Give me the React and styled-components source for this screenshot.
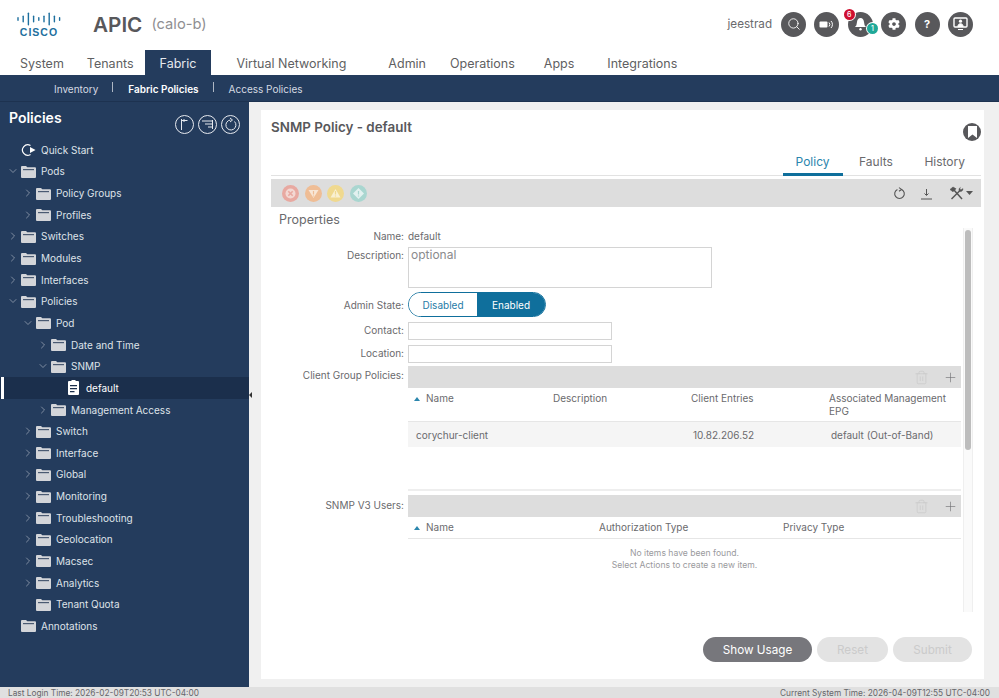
import React from 'react';
import styled, { createGlobalStyle } from 'styled-components';
import { Search, ChevronRight, ChevronDown, Plus, Trash2 } from 'lucide-react';
import { FaCog } from 'react-icons/fa';

const GlobalStyle = createGlobalStyle`
  html, body { margin: 0; padding: 0; background: #fff; }
  * { box-sizing: border-box; }
  body { font-family: Inter, "Noto Sans", sans-serif; color: #58585b; }
`;

const NAVY = '#243c5d';

const Page = styled.div`
  width: 999px;
  height: 698px;
  display: flex;
  flex-direction: column;
  overflow: hidden;
`;

/* ---------- top header ---------- */
const Header = styled.header`
  height: 50px;
  display: flex;
  align-items: center;
  padding: 0 26px 2px 17px;
`;
const Logo = styled.div`
  width: 44px;
  display: flex;
  flex-direction: column;
  align-items: center;
  margin-right: 32px;
`;
const LogoWord = styled.span`
  font-family: "Liberation Sans", sans-serif;
  font-weight: 700;
  font-size: 10.5px;
  line-height: 10px;
  letter-spacing: 1px;
  color: #1d6f9e;
`;
const AppName = styled.span`
  font-size: 20.7px;
  font-weight: 600;
  color: #58585b;
  margin-right: 9px;
`;
const Instance = styled.span`
  font-size: 14.7px;
  color: #8f8f92;
`;
const UserArea = styled.div`
  margin-left: auto;
  display: flex;
  align-items: center;
  gap: 8.4px;
`;
const UserName = styled.span`
  font-size: 11.7px;
  color: #6a6a6d;
  margin-right: 0.6px;
`;
const RoundButton = styled.div`
  position: relative;
  width: 25px;
  height: 25px;
  border-radius: 50%;
  background: #58585b;
  color: #fff;
  display: flex;
  align-items: center;
  justify-content: center;
  font-size: 11px;
  font-weight: 700;
`;
const Badge = styled.span`
  position: absolute;
  width: 11px;
  height: 11px;
  border-radius: 50%;
  background: ${(p) => p.$color};
  color: #fff;
  font-size: 7px;
  font-weight: 500;
  line-height: 11px;
  text-align: center;
  left: ${(p) => p.$left}px;
  top: ${(p) => p.$top}px;
  box-shadow: 0 0 0 1px #fff;
`;

/* ---------- main tabs ---------- */
const TabBar = styled.nav`
  height: 25px;
  display: flex;
  padding-left: 5px;
`;
const TopTab = styled.div`
  padding: 1px 15px 0;
  margin-left: ${(p) => p.$gap || 0}px;
  display: flex;
  align-items: center;
  font-size: 12.5px;
  color: ${(p) => (p.$active ? '#e6e9ee' : '#5f5f62')};
  background: ${(p) => (p.$active ? NAVY : 'transparent')};
`;
const SubBar = styled.nav`
  height: 27px;
  background: ${NAVY};
  display: flex;
  align-items: center;
  padding: 1px 0 0 54px;
  border-bottom: 1px solid #1d3250;
`;
const SubItem = styled.span`
  font-size: 10px;
  color: ${(p) => (p.$active ? '#fff' : '#d5dae2')};
  font-weight: ${(p) => (p.$active ? 600 : 400)};
`;
const SubDivider = styled.span`
  width: 1px;
  height: 10px;
  margin: 0 15px 0 14px;
  background: #aeb7c4;
  transform: translateY(-2px);
`;

/* ---------- body ---------- */
const Body = styled.div`
  flex: 1;
  display: flex;
  min-height: 0;
  background: #f0f0f0;
  position: relative;
`;
const Sidebar = styled.aside`
  width: 249px;
  background: ${NAVY};
  flex-shrink: 0;
  color: #dfe3e9;
`;
const SideHead = styled.div`
  height: 37px;
  display: flex;
  align-items: flex-start;
  padding: 7px 9px 0 9px;
`;
const SideTitle = styled.h2`
  margin: 0;
  font-size: 14px;
  line-height: 18px;
  font-weight: 600;
  color: #fff;
`;
const SideTools = styled.div`
  margin-left: auto;
  margin-top: 6px;
  display: flex;
  gap: 4px;
`;
const TreeRow = styled.div`
  position: relative;
  height: 21.65px;
  display: flex;
  align-items: center;
  padding-left: ${(p) => 7 + p.$level * 15}px;
  font-size: 10px;
  background: ${(p) => (p.$selected ? '#1b2f4c' : 'transparent')};
  color: ${(p) => (p.$selected ? '#fff' : '#dfe3e9')};

  &::before {
    content: ${(p) => (p.$selected ? "''" : 'none')};
    position: absolute;
    left: 1px;
    top: 0;
    bottom: 0;
    width: 3px;
    background: #fff;
  }
`;
const Chevron = styled.span`
  width: 12px;
  margin-right: 2px;
  display: flex;
  justify-content: center;
  color: #aeb7c4;
`;
const TreeIcon = styled.span`
  width: 15px;
  margin-right: 5px;
  display: flex;
  justify-content: center;
`;
const SplitHandle = styled.span`
  position: absolute;
  left: 249px;
  top: 290px;
  width: 0;
  height: 0;
  border-top: 3px solid transparent;
  border-bottom: 3px solid transparent;
  border-right: 3px solid #333;
`;

const Card = styled.main`
  width: 723px;
  margin: 8px 0 8px 12px;
  background: #fff;
  padding: 0 3px 0 10px;
  display: flex;
  flex-direction: column;
`;
const CardHead = styled.div`
  height: 40px;
  display: flex;
  justify-content: space-between;
  padding-top: 9px;
`;
const CardTitle = styled.h1`
  margin: 0;
  font-size: 13.4px;
  line-height: 17px;
  font-weight: 600;
  color: #58585b;
`;
const Bookmark = styled.div`
  width: 18px;
  height: 18px;
  margin-top: 4px;
  border-radius: 50%;
  background: #58585b;
  display: flex;
  justify-content: center;
`;
const DetailTabs = styled.div`
  height: 26px;
  display: flex;
  justify-content: flex-end;
  gap: 1.5px;
  padding-right: 1px;
  border-bottom: 1px solid #e2e2e2;
`;
const DetailTab = styled.div`
  padding: 4px ${(p) => (p.$active ? 13 : 15)}px 0;
  font-size: 12px;
  line-height: 16px;
  color: ${(p) => (p.$active ? '#2b86ad' : '#6a6a6d')};
  border-bottom: 3px solid ${(p) => (p.$active ? '#0f6f9c' : 'transparent')};
  margin-bottom: -1px;
`;
const ToolBar = styled.div`
  height: 28px;
  margin-top: 3px;
  background: #dddddd;
  display: flex;
  align-items: center;
  padding: 0 0 0 11px;
`;
const FaultDots = styled.div`
  display: flex;
  gap: 5.5px;
`;
const ToolRight = styled.div`
  margin-left: auto;
  display: flex;
  align-items: center;
  color: #555;
`;
const ToolSlot = styled.span`
  display: flex;
  align-items: center;
  justify-content: center;
  width: ${(p) => p.$w}px;
`;
const SectionTitle = styled.h3`
  margin: 0 0 0 8px;
  height: 21px;
  font-size: 12.5px;
  line-height: 26px;
  font-weight: 400;
  color: #6a6a6d;
`;
const Scroller = styled.div`
  height: 384px;
  display: flex;
`;
const FormBody = styled.div`
  width: 692px;
  flex-shrink: 0;
`;
const ScrollTrack = styled.div`
  width: 10px;
  background: #fafafa;
  border-left: 1px solid #efefef;
  border-right: 1px solid #efefef;
  padding: 2px 1px 0;
`;
const ScrollThumb = styled.div`
  height: 220px;
  background: #bdbdbd;
  border-radius: 3px;
`;
const Row = styled.div`
  display: flex;
  align-items: ${(p) => p.$align || 'center'};
  margin-bottom: ${(p) => p.$mb || 0}px;
  min-height: ${(p) => p.$h || 0}px;
`;
const Label = styled.label`
  width: 133px;
  flex-shrink: 0;
  margin: ${(p) => p.$top || 0}px 4px 0 0;
  text-align: right;
  font-size: 10px;
  line-height: 16px;
  color: #6a6a6d;
`;
const Value = styled.span`
  font-size: 10px;
  color: #6a6a6d;
`;
const TextArea = styled.div`
  width: 304px;
  height: 41px;
  border: 1px solid #d4d4d4;
  padding: 0 2px;
  font-size: 12px;
  line-height: 14px;
  color: #8a8a8d;
`;
const Toggle = styled.div`
  display: flex;
  width: 138px;
  height: 25px;
  border: 1px solid #0f6f9c;
  border-radius: 13px;
  overflow: hidden;
  font-size: 10px;
`;
const ToggleSide = styled.span`
  flex: 1;
  display: flex;
  align-items: center;
  justify-content: center;
  padding-top: 1px;
  background: ${(p) => (p.$on ? '#0f6f9c' : '#fff')};
  color: ${(p) => (p.$on ? '#fff' : '#1f7ba6')};
`;
const Input = styled.div`
  width: 204px;
  height: 18px;
  border: 1px solid #d4d4d4;
`;
const TableBlock = styled.div`
  width: 553px;
`;
const TableBar = styled.div`
  height: 22px;
  background: #dddddd;
  display: flex;
  align-items: center;
  justify-content: flex-end;
  gap: 14px;
  padding-right: 3px;
  color: #6f6f72;
`;
const TableGrid = styled.div`
  display: grid;
  grid-template-columns: ${(p) => p.$cols};
  height: ${(p) => p.$h}px;
  align-items: ${(p) => p.$align || 'center'};
  padding-top: ${(p) => p.$top || 0}px;
  font-size: 10px;
  color: #6a6a6d;
  background: ${(p) => p.$bg || 'transparent'};
  border-bottom: ${(p) => (p.$line ? '1px solid #e6e6e6' : 'none')};
`;
const Cell = styled.div`
  padding-left: ${(p) => p.$pad ?? 8}px;
  line-height: 13px;
  display: flex;
  align-items: center;
`;
const SortCaret = styled.span`
  width: 0;
  height: 0;
  margin-right: 6px;
  border-left: 3px solid transparent;
  border-right: 3px solid transparent;
  border-bottom: 4px solid #2b86ad;
`;
const Spacer = styled.div`
  height: 44px;
  border-bottom: 2px solid #eeeeee;
  margin-bottom: 4px;
`;
const EmptyNote = styled.div`
  padding-top: 8px;
  text-align: center;
  font-size: 8.6px;
  line-height: 12px;
  color: #9a9a9d;
`;
const Actions = styled.div`
  flex: 1;
  display: flex;
  justify-content: flex-end;
  align-items: flex-start;
  gap: 5px;
  padding: 25px 9px 0 0;
`;
const Pill = styled.button`
  height: 25px;
  width: ${(p) => p.$w}px;
  border: 0;
  border-radius: 13px;
  font-family: inherit;
  font-size: 11.7px;
  background: ${(p) => (p.$primary ? '#77777c' : '#e3e3e3')};
  color: ${(p) => (p.$primary ? '#fff' : '#cbcbcb')};
`;
const Footer = styled.footer`
  height: 11px;
  background: #e0e0e0;
  display: flex;
  justify-content: space-between;
  align-items: center;
  padding: 0 9px 0 8px;
  font-size: 8.3px;
  color: #66666a;
`;

/* ---------- drawings ---------- */
const CiscoBars = () => (
  <svg width="44" height="15" viewBox="0 0 44 15" fill="#1d6f9e">
    {[[1, 4], [6.2, 7], [11.4, 13], [16.6, 7], [21.8, 4], [27, 7], [32.2, 13], [37.4, 7], [42.6, 4]].map(([x, h]) => (
      <rect key={x} x={x - 0.7} y={(14 - h) / 2} width="1.4" height={h} rx="0.7" />
    ))}
  </svg>
);

const Folder = () => (
  <svg width="15" height="13" viewBox="0 0 15 13">
    <path d="M0 2a1 1 0 0 1 1-1h4l1.3 1.2H14a1 1 0 0 1 1 1V12a1 1 0 0 1-1 1H1a1 1 0 0 1-1-1z" fill="#d3d5d9" />
    <rect x="2" y="4" width="11" height="1.2" fill="#4a5a72" />
  </svg>
);

const QuickStartIcon = () => (
  <svg width="15" height="14" viewBox="0 0 15 14" fill="none">
    <path d="M9.5 2.6a5.2 5.2 0 1 0 0 8.8" stroke="#fff" strokeWidth="1.2" />
    <path d="M9 4 14.5 7 9 10z" fill="#fff" />
  </svg>
);

const PolicyDocIcon = () => (
  <svg width="11" height="15" viewBox="0 0 11 15">
    <path d="M1 1h2.5V0h4v1H10a1 1 0 0 1 1 1v12a1 1 0 0 1-1 1H1a1 1 0 0 1-1-1V2a1 1 0 0 1 1-1z" fill="#fff" />
    <path d="M2 5h7v1.2H2zM2 8h7v1.2H2zM2 11h4.5v1.2H2z" fill="#1b2f4c" />
  </svg>
);

const SideRound = ({ children }) => (
  <svg width="19" height="19" viewBox="0 0 19 19" fill="none" stroke="#e6e9ee" strokeWidth="1">
    <circle cx="9.5" cy="9.5" r="9" />
    {children}
  </svg>
);

const Megaphone = () => (
  <svg width="15" height="11" viewBox="0 0 15 11" fill="none">
    <rect x="0.5" y="2.5" width="8" height="6" rx="1" fill="#fff" />
    <path d="M10 3.5a3 3 0 0 1 0 4M12 2a5 5 0 0 1 0 7" stroke="#fff" strokeWidth="1" />
  </svg>
);

const BellIcon = () => (
  <svg width="13" height="14" viewBox="0 0 13 14" fill="#fff">
    <path d="M6.5 1C4.3 1 3.2 2.8 3 5L2.4 8.2 1 10h11l-1.4-1.8L10 5C9.8 2.8 8.7 1 6.5 1z" />
    <circle cx="6.5" cy="12.2" r="1.2" />
  </svg>
);

const ScreenIcon = () => (
  <svg width="15" height="14" viewBox="0 0 15 14" fill="none">
    <rect x="1" y="1" width="13" height="9" rx="1" stroke="#fff" strokeWidth="1.4" />
    <circle cx="7.5" cy="4.2" r="1.6" fill="#fff" />
    <path d="M4.8 9.5c.3-2 1.3-2.8 2.7-2.8s2.4.8 2.7 2.8zM5 12.5h5" fill="#fff" stroke="#fff" />
  </svg>
);

const BookmarkGlyph = () => (
  <svg width="9" height="12" viewBox="0 0 9 12" style={{ marginTop: 3 }}>
    <path d="M0 0h9v12L4.5 8.5 0 12z" fill="#fff" />
  </svg>
);

const FaultDot = ({ color, kind }) => (
  <svg width="17" height="17" viewBox="0 0 17 17">
    <circle cx="8.5" cy="8.5" r="8.5" fill={color} />
    {kind === 'x' && (
      <>
        <circle cx="8.5" cy="8.5" r="5" fill="#f3d8d3" />
        <path d="M6.3 6.3l4.4 4.4M10.7 6.3l-4.4 4.4" stroke={color} strokeWidth="1.6" fill="none" />
      </>
    )}
    {kind === 'down' && <path d="M3.5 5h10l-5 8z" fill="#f8e6d6" />}
    {kind === 'up' && <path d="M8.5 4l5 8.5h-10z" fill="#f9f0d2" />}
    {kind === 'diamond' && <path d="M8.5 3l5.5 5.5-5.5 5.5L3 8.5z" fill="#e2f1ef" />}
    {kind !== 'x' && <path d="M8.5 6v3.6M8.5 10.4v1" stroke={color} strokeWidth="1.2" fill="none" />}
  </svg>
);

const RefreshIcon = () => (
  <svg width="13" height="13" viewBox="0 0 13 13" fill="none" stroke="#555" strokeWidth="1.1">
    <path d="M8.6 2.4a4.8 4.8 0 1 1-4.2 0" />
    <path d="M6 0.6 8.6 2.4 6 4.2" />
  </svg>
);

const DownloadIcon = () => (
  <svg width="13" height="13" viewBox="0 0 13 13" fill="none" stroke="#555" strokeWidth="1">
    <path d="M6.5 2v6M4.5 6.5l2 2 2-2M1 12h11" />
  </svg>
);

const ToolsIcon = () => (
  <svg width="15" height="14" viewBox="0 0 15 14" fill="none" stroke="#555">
    <path d="M4.5 3.5 13 13" strokeWidth="1.5" />
    <path d="M1 3.5 4 1l3 1.8-3 3z" fill="#555" strokeWidth="0.6" />
    <path d="M11 4.5 2.5 13" strokeWidth="1.5" />
    <path d="M14 2.5a2.6 2.6 0 0 1-3.6 2.8 2.6 2.6 0 0 1 1-3.9L10.8 3l1.2.8z" fill="#555" strokeWidth="0.4" />
  </svg>
);

const tree = [
  { level: 0, label: 'Quick Start', icon: 'start' },
  { level: 0, label: 'Pods', open: true, arrow: true },
  { level: 1, label: 'Policy Groups', arrow: true },
  { level: 1, label: 'Profiles', arrow: true },
  { level: 0, label: 'Switches', arrow: true },
  { level: 0, label: 'Modules', arrow: true },
  { level: 0, label: 'Interfaces', arrow: true },
  { level: 0, label: 'Policies', open: true, arrow: true },
  { level: 1, label: 'Pod', open: true, arrow: true },
  { level: 2, label: 'Date and Time', arrow: true },
  { level: 2, label: 'SNMP', open: true, arrow: true },
  { level: 3, label: 'default', icon: 'doc', selected: true },
  { level: 2, label: 'Management Access', arrow: true },
  { level: 1, label: 'Switch', arrow: true },
  { level: 1, label: 'Interface', arrow: true },
  { level: 1, label: 'Global', arrow: true },
  { level: 1, label: 'Monitoring', arrow: true },
  { level: 1, label: 'Troubleshooting', arrow: true },
  { level: 1, label: 'Geolocation', arrow: true },
  { level: 1, label: 'Macsec', arrow: true },
  { level: 1, label: 'Analytics', arrow: true },
  { level: 1, label: 'Tenant Quota' },
  { level: 0, label: 'Annotations' },
];

const topTabs = [
  { label: 'System' },
  { label: 'Tenants', gap: -7 },
  { label: 'Fabric', active: true, gap: -4 },
  { label: 'Virtual Networking', gap: 10 },
  { label: 'Admin', gap: 12 },
  { label: 'Operations', gap: -6 },
  { label: 'Apps', gap: -1 },
  { label: 'Integrations', gap: 3 },
];

const TreeItem = ({ item }) => (
  <TreeRow $level={item.level} $selected={item.selected}>
    <Chevron>
      {item.arrow && (item.open ? <ChevronDown size={12} strokeWidth={1.3} /> : <ChevronRight size={12} strokeWidth={1.3} />)}
    </Chevron>
    <TreeIcon>
      {item.icon === 'start' ? <QuickStartIcon /> : item.icon === 'doc' ? <PolicyDocIcon /> : <Folder />}
    </TreeIcon>
    {item.label}
  </TreeRow>
);

const TableTools = () => (
  <TableBar>
    <Trash2 size={15} strokeWidth={1} color="#c6c6c6" />
    <Plus size={15} strokeWidth={1} />
  </TableBar>
);

export default function App() {
  return (
    <Page>
      <GlobalStyle />
      <Header>
        <Logo>
          <CiscoBars />
          <LogoWord>CISCO</LogoWord>
        </Logo>
        <AppName>APIC</AppName>
        <Instance>(calo-b)</Instance>
        <UserArea>
          <UserName>jeestrad</UserName>
          <RoundButton><Search size={14} strokeWidth={1.5} /></RoundButton>
          <RoundButton><Megaphone /></RoundButton>
          <RoundButton>
            <BellIcon />
            <Badge $color="#cf0f30" $left={-4} $top={-3}>6</Badge>
            <Badge $color="#1fa898" $left={19} $top={11}>1</Badge>
          </RoundButton>
          <RoundButton><FaCog size={12} /></RoundButton>
          <RoundButton>?</RoundButton>
          <RoundButton><ScreenIcon /></RoundButton>
        </UserArea>
      </Header>

      <TabBar>
        {topTabs.map((t) => (
          <TopTab key={t.label} $active={t.active} $gap={t.gap}>{t.label}</TopTab>
        ))}
      </TabBar>
      <SubBar>
        <SubItem>Inventory</SubItem>
        <SubDivider />
        <SubItem $active>Fabric Policies</SubItem>
        <SubDivider />
        <SubItem>Access Policies</SubItem>
      </SubBar>

      <Body>
        <Sidebar>
          <SideHead>
            <SideTitle>Policies</SideTitle>
            <SideTools>
              <SideRound><path d="M6.5 4v11M6.5 5.5h6M9 4v3" /></SideRound>
              <SideRound><path d="M4 6h11M7 9h8M10 12h5M14.5 5v9" /></SideRound>
              <SideRound><path d="M13.5 6.5a5 5 0 1 1-4-1.5M9 3l2.5 2L9 7" /></SideRound>
            </SideTools>
          </SideHead>
          {tree.map((item) => <TreeItem key={item.label + item.level} item={item} />)}
        </Sidebar>
        <SplitHandle />

        <Card>
          <CardHead>
            <CardTitle>SNMP Policy - default</CardTitle>
            <Bookmark><BookmarkGlyph /></Bookmark>
          </CardHead>
          <DetailTabs>
            <DetailTab $active>Policy</DetailTab>
            <DetailTab>Faults</DetailTab>
            <DetailTab>History</DetailTab>
          </DetailTabs>
          <ToolBar>
            <FaultDots>
              <FaultDot color="#e8a9a1" kind="x" />
              <FaultDot color="#efbd95" kind="down" />
              <FaultDot color="#f0d98f" kind="up" />
              <FaultDot color="#a9d6d0" kind="diamond" />
            </FaultDots>
            <ToolRight>
              <ToolSlot $w={27}><RefreshIcon /></ToolSlot>
              <ToolSlot $w={27}><DownloadIcon /></ToolSlot>
              <ToolSlot $w={41}>
                <ToolsIcon />
                <svg width="7" height="4" viewBox="0 0 7 4" style={{ marginLeft: 2 }}><path d="M0 0h7L3.5 4z" fill="#555" /></svg>
              </ToolSlot>
            </ToolRight>
          </ToolBar>
          <SectionTitle>Properties</SectionTitle>
          <Scroller>
            <FormBody>
              <Row $h={16} $mb={3}>
                <Label>Name:</Label>
                <Value>default</Value>
              </Row>
              <Row $align="flex-start" $mb={4}>
                <Label>Description:</Label>
                <TextArea>optional</TextArea>
              </Row>
              <Row $mb={5}>
                <Label $top={1}>Admin State:</Label>
                <Toggle>
                  <ToggleSide>Disabled</ToggleSide>
                  <ToggleSide $on>Enabled</ToggleSide>
                </Toggle>
              </Row>
              <Row $mb={5}>
                <Label $top={-2}>Contact:</Label>
                <Input />
              </Row>
              <Row $mb={3}>
                <Label $top={-2}>Location:</Label>
                <Input />
              </Row>
              <Row $align="flex-start">
                <Label $top={1}>Client Group Policies:</Label>
                <TableBlock>
                  <TableTools />
                  <TableGrid $cols="137px 138px 138px 140px" $h={34} $top={4} $align="start" $line>
                    <Cell $pad={6}><SortCaret />Name</Cell>
                    <Cell>Description</Cell>
                    <Cell>Client Entries</Cell>
                    <Cell>Associated Management EPG</Cell>
                  </TableGrid>
                  <TableGrid $cols="137px 138px 138px 140px" $h={25} $top={1} $bg="#f5f5f5">
                    <Cell>corychur-client</Cell>
                    <Cell />
                    <Cell $pad={10}>10.82.206.52</Cell>
                    <Cell $pad={10}>default (Out-of-Band)</Cell>
                  </TableGrid>
                  <Spacer />
                </TableBlock>
              </Row>
              <Row $align="flex-start">
                <Label $top={2}>SNMP V3 Users:</Label>
                <TableBlock>
                  <TableTools />
                  <TableGrid $cols="183px 184px 186px" $h={22} $line>
                    <Cell $pad={6}><SortCaret />Name</Cell>
                    <Cell>Authorization Type</Cell>
                    <Cell>Privacy Type</Cell>
                  </TableGrid>
                  <EmptyNote>
                    No items have been found.
                    <br />
                    Select Actions to create a new item.
                  </EmptyNote>
                </TableBlock>
              </Row>
            </FormBody>
            <ScrollTrack><ScrollThumb /></ScrollTrack>
          </Scroller>
          <Actions>
            <Pill $primary $w={109}>Show Usage</Pill>
            <Pill $w={71}>Reset</Pill>
            <Pill $w={79}>Submit</Pill>
          </Actions>
        </Card>
      </Body>

      <Footer>
        <span>Last Login Time: 2026-02-09T20:53 UTC-04:00</span>
        <span>Current System Time: 2026-04-09T12:55 UTC-04:00</span>
      </Footer>
    </Page>
  );
}
